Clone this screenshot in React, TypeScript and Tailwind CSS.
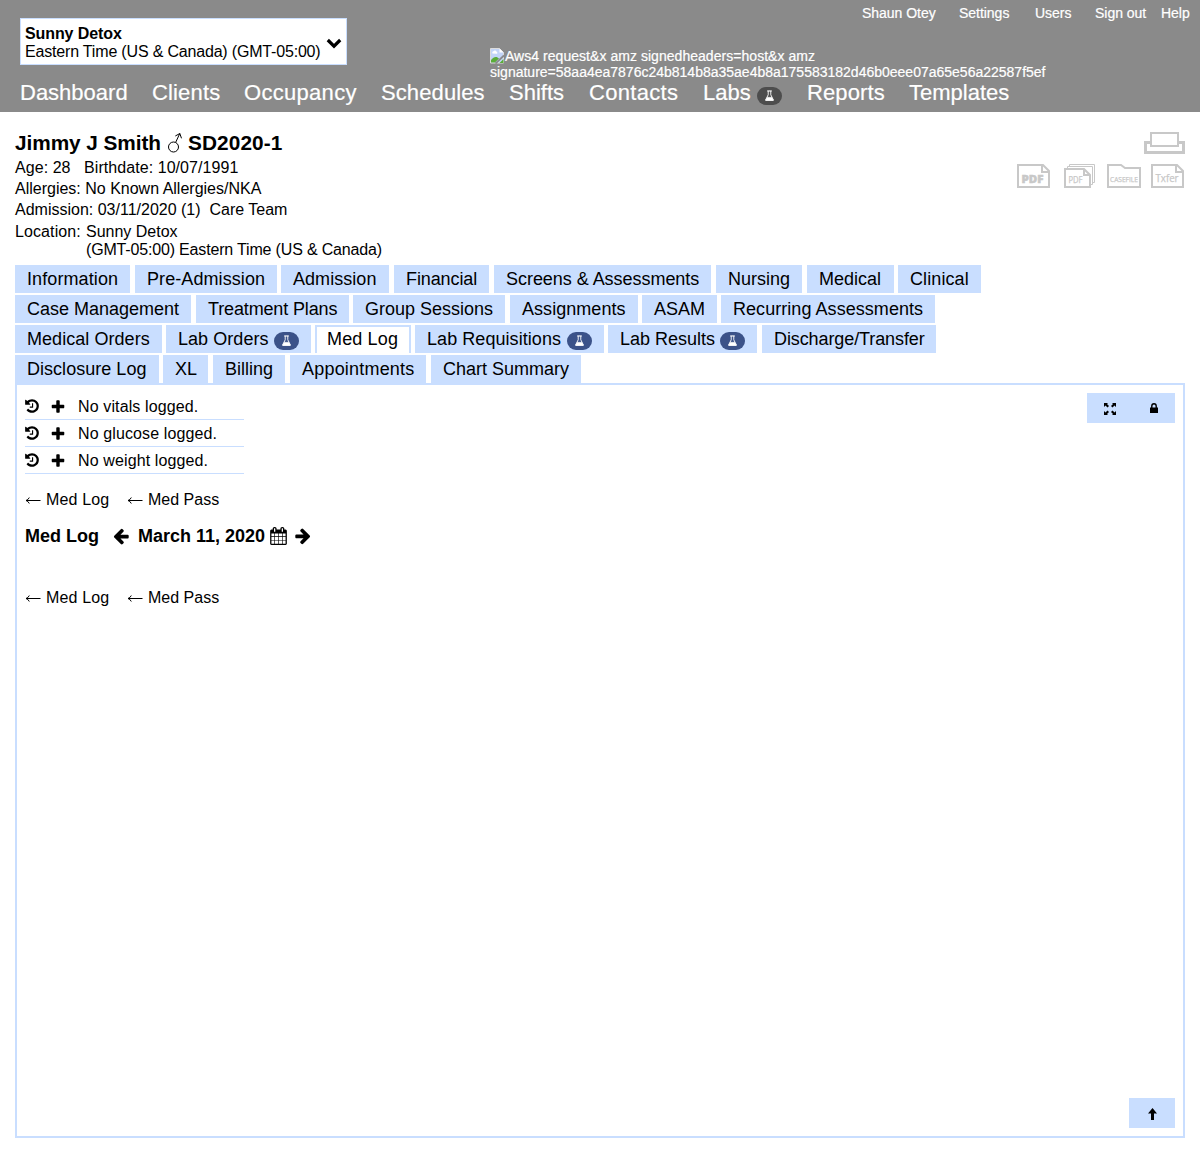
import React from "react";

type IconProps = { className?: string };

const Flask = ({ className = "" }: IconProps) => (
  <svg viewBox="0 0 12 13" className={className} fill="none" stroke="white">
    <path d="M3.5 1h5" strokeWidth="1.2" />
    <path d="M4.6 1v4.2L1.8 10.8h8.4L7.4 5.2V1" strokeWidth="1" />
    <path d="M3.6 8h4.8l1.8 3.4H1.8z" fill="white" strokeWidth="0.8" />
  </svg>
);

const History = () => (
  <svg viewBox="0 0 1536 1792" className="h-4 w-[14px] shrink-0">
    <path d="M1536 896q0 156-61 298t-164 245-245 164-298 61q-172 0-327-72.5t-264-204.5q-7-10-6.5-22.5t8.5-20.5l137-138q10-9 25-9 16 2 23 12 73 95 179 147t225 52q104 0 198.5-40.5t163.5-109.5 109.5-163.5 40.5-198.5-40.5-198.5-109.5-163.5-163.5-109.5-198.5-40.5q-98 0-188 35.5t-160 101.5l137 138q31 30 14 69-17 40-59 40h-448q-26 0-45-19t-19-45v-448q0-42 40-59 39-17 69 14l130 129q107-101 244.5-156.5t284.5-55.5q156 0 298 61t245 164 164 245 61 298zm-640-288v448q0 14-9 23t-23 9h-320q-14 0-23-9t-9-23v-64q0-14 9-23t23-9h224v-352q0-14 9-23t23-9h64q14 0 23 9t9 23z" />
  </svg>
);

const Plus = () => (
  <svg viewBox="0 0 1792 1792" className="mt-px ml-[11px] size-4 shrink-0">
    <path d="M1600 736v192q0 40-28 68t-68 28h-416v416q0 40-28 68t-68 28h-192q-40 0-68-28t-28-68v-416h-416q-40 0-68-28t-28-68v-192q0-40 28-68t68-28h416v-416q0-40 28-68t68-28h192q40 0 68 28t28 68v416h416q40 0 68 28t28 68z" />
  </svg>
);

const BoldArrow = ({ className = "" }: IconProps) => (
  <svg viewBox="0 0 1792 1792" className={className}>
    <path d="M1664 896v128q0 53-32.5 90.5t-84.5 37.5h-704l293 294q38 36 38 90t-38 90l-75 76q-37 37-90 37-52 0-91-37l-651-652q-37-37-37-90 0-52 37-91l651-650q38-38 91-38 52 0 90 38l75 74q38 38 38 91t-38 91l-293 293h704q52 0 84.5 37.5t32.5 90.5z" />
  </svg>
);

const Calendar = () => (
  <svg viewBox="64 0 1664 1792" className="ml-[5px] h-[18px] w-[17px]">
    <path d="M192 1664h288v-288h-288v288zm352 0h320v-288h-320v288zm-352-352h288v-320h-288v320zm352 0h320v-320h-320v320zm-352-384h288v-288h-288v288zm736 736h320v-288h-320v288zm-384-736h320v-288h-320v288zm768 736h288v-288h-288v288zm-384-352h320v-320h-320v320zm-352-864v-288q0-13-9.5-22.5t-22.5-9.5h-64q-13 0-22.5 9.5t-9.5 22.5v288q0 13 9.5 22.5t22.5 9.5h64q13 0 22.5-9.5t9.5-22.5zm736 864h288v-320h-288v320zm-384-384h320v-288h-320v288zm384 0h288v-288h-288v288zm32-480v-288q0-13-9.5-22.5t-22.5-9.5h-64q-13 0-22.5 9.5t-9.5 22.5v288q0 13 9.5 22.5t22.5 9.5h64q13 0 22.5-9.5t9.5-22.5zm384-64v1280q0 52-38 90t-90 38h-1408q-52 0-90-38t-38-90v-1280q0-52 38-90t90-38h128v-96q0-66 47-113t113-47h64q66 0 113 47t47 113v96h384v-96q0-66 47-113t113-47h64q66 0 113 47t47 113v96h128q52 0 90 38t38 90z" />
  </svg>
);

const BrokenImage = () => (
  <svg viewBox="0 0 14 16" className="h-4 w-[14px] shrink-0">
    <path d="M0.5 0.5h9l4 4v10.5h-13z" fill="#c3d5f8" stroke="#dcdcdc" />
    <path d="M9.5 0.5v4h4z" fill="#fff" />
    <path d="M2.5 5.5a1.5 1.5 0 0 1 1-2.3 1.8 1.8 0 0 1 3.2.7 1 1 0 0 1 .3 1.8z" fill="#fff" />
    <path d="M1 14.5v-2.500c3-4 6-3.500 8-1.500l-4 4z" fill="#5aac38" />
    <path d="M14 7.500L5.500 15.500" stroke="#8a8a8a" strokeWidth="1.800" />
    <path d="M13.500 11l-4 4h4z" fill="#5aac38" />
  </svg>
);

const ThinArrow = () => (
  <svg viewBox="0 0 16 10" className="mr-[5px] h-[10px] w-4" fill="none" stroke="black">
    <path d="M1 5.500h14.500" strokeWidth="1" />
    <path d="M4.300 2.500Q3.200 4.900 1 5.500Q3.200 6.100 4.300 8.500" strokeWidth="1" />
  </svg>
);

const nav: [string, string][] = [
  ["Dashboard", "w-[132px]"],
  ["Clients", "w-[92px] tracking-[0.15px]"],
  ["Occupancy", "w-[137px] tracking-[0.3px]"],
  ["Schedules", "w-[128px] tracking-[0.1px]"],
  ["Shifts", "w-[80px]"],
  ["Contacts", "w-[114px] tracking-[0.3px]"],
  ["Labs", "w-[104px]"],
  ["Reports", "w-[102px] tracking-[0.1px]"],
  ["Templates", "w-[110px]"],
];

const rows: [string, string][][] = [
  [
    ["Information", "w-[115px] mr-[5px] tracking-[0.1px]"],
    ["Pre-Admission", "w-[142px] mr-[4px] tracking-[0.08px]"],
    ["Admission", "w-[108px] mr-[5px] tracking-[0.05px]"],
    ["Financial", "w-[95px] mr-[5px] tracking-[-0.1px]"],
    ["Screens & Assessments", "w-[217px] mr-[5px] tracking-[-0.04px]"],
    ["Nursing", "w-[86px] mr-[5px]"],
    ["Medical", "w-[87px] mr-[4px]"],
    ["Clinical", "w-[83px] tracking-[0.1px]"],
  ],
  [
    ["Case Management", "w-[176px] mr-[5px]"],
    ["Treatment Plans", "w-[153px] mr-[4px] tracking-[-0.14px]"],
    ["Group Sessions", "w-[152px] mr-[5px]"],
    ["Assignments", "w-[128px] mr-[4px] tracking-[0.05px]"],
    ["ASAM", "w-[75px] mr-[4px]"],
    ["Recurring Assessments", "w-[214px] tracking-[0.05px]"],
  ],
  [
    ["Medical Orders", "w-[147px] mr-[4px] tracking-[0.05px]"],
    ["Lab Orders", "w-[145px] mr-[4px] tracking-[0.05px]"],
    ["Med Log", "w-[96px] mr-[4px] tracking-[0.15px]"],
    ["Lab Requisitions", "w-[189px] mr-[4px] tracking-[0.06px]"],
    ["Lab Results", "w-[149px] mr-[5px]"],
    ["Discharge/Transfer", "w-[174px] tracking-[-0.1px]"],
  ],
  [
    ["Disclosure Log", "w-[144px] mr-[4px] tracking-[0.03px]"],
    ["XL", "w-[45px] mr-[5px]"],
    ["Billing", "w-[72px] mr-[5px]"],
    ["Appointments", "w-[136px] mr-[5px] tracking-[0.2px]"],
    ["Chart Summary", "w-[150px]"],
  ],
];

const withFlask = ["Lab Orders", "Lab Requisitions", "Lab Results"];

function Tab({ label, size }: { label: string; size: string }) {
  const active = label === "Med Log";
  return (
    <div
      className={`flex h-7 items-center whitespace-nowrap text-[18px] leading-[28px] ${size} ${
        active ? "border-x-2 border-t-2 border-[#c9deff] bg-white pb-[2px] pl-[10px]" : "bg-[#c9deff] pl-3"
      }`}
    >
      {label}
      {withFlask.includes(label) && (
        <span className="mt-1 ml-auto mr-3 flex h-[18px] w-[25px] items-center justify-center rounded-full bg-[#3b5289]">
          <Flask className="h-[12px] w-[11px]" />
        </span>
      )}
    </div>
  );
}

function BackLinks() {
  return (
    <div className="flex h-5 items-center text-[16px] leading-5">
      <span className="flex w-[102px] items-center tracking-[0.15px]"><ThinArrow />Med Log</span>
      <span className="flex items-center"><ThinArrow />Med Pass</span>
    </div>
  );
}

export default function App() {
  return (
    <div className="h-[1175px] w-[1200px] overflow-hidden bg-white font-['Liberation_Sans',Arial,sans-serif] text-[16px] text-black">
      <header className="relative h-28 bg-[#8a8a8a] text-white">
        <div className="flex justify-between">
          <div className="mt-[18px] ml-5 flex h-[47px] w-[327px] items-center border border-[#c9deff] bg-white pl-1 leading-[18px] whitespace-nowrap text-black">
            <div className="pt-[2px]">
              <div className="font-bold tracking-[-0.1px]">Sunny Detox</div>
              <div className="tracking-[-0.18px]">Eastern Time (US &amp; Canada) (GMT-05:00)</div>
            </div>
            <svg viewBox="0 0 16 12" className="mt-1 ml-auto mr-1 h-3 w-4 shrink-0" fill="none" stroke="black" strokeWidth="3.200">
              <path d="M1.800 2L8 8.200L14.200 2" />
            </svg>
          </div>
          <div className="flex pt-[5px] pr-[10px] text-[14px] leading-4 tracking-[-0.03px] whitespace-nowrap [-webkit-text-stroke:0.200px_white]">
            <span className="w-[97px]">Shaun Otey</span>
            <span className="w-[76px]">Settings</span>
            <span className="w-[60px]">Users</span>
            <span className="w-[66px]">Sign out</span>
            <span className="w-[29px]">Help</span>
          </div>
        </div>
        <div className="absolute top-12 left-[490px] text-[14px] leading-4 whitespace-nowrap [-webkit-text-stroke:0.200px_white]">
          <div className="flex"><BrokenImage /><span className="ml-px tracking-[0.04px]">Aws4 request&amp;x amz signedheaders=host&amp;x amz</span></div>
          <div>signature=58aa4ea7876c24b814b8a35ae4b8a175583182d46b0eee07a65e56a22587f5ef</div>
        </div>
        <nav className="mt-[15px] ml-5 flex text-[22px] leading-[26px] [-webkit-text-stroke:0.200px_white]">
          {nav.map(([label, size]) => (
            <span key={label} className={`flex items-center ${size}`}>
              {label}
              {label === "Labs" && (
                <span className="mt-[6px] ml-[6px] flex h-[18px] w-[25px] items-center justify-center rounded-full bg-[#4d4d4d]">
                  <Flask className="h-[12px] w-[11px]" />
                </span>
              )}
            </span>
          ))}
        </nav>
      </header>

      <main className="px-[15px] pt-[17px]">
        <section className="flex h-[136px] justify-between">
          <div>
            <h1 className="flex h-[28px] items-start text-[20.800px] leading-[27px] font-bold whitespace-nowrap">
              <span className="w-[146px] tracking-[-0.07px]">Jimmy J Smith</span>
              <svg viewBox="0 0 16 22" className="mt-[3px] ml-[6px] mr-[5px] h-[22px] w-4" fill="none" stroke="black" strokeWidth="1">
                <circle cx="6.500" cy="15" r="5" />
                <path d="M8.600 10.500L12.800 1.500M8.300 4L12.800 1.500L14.500 6.300" />
              </svg>
              <span className="tracking-[0.1px]">SD2020-1</span>
            </h1>
            <div className="h-[21px] leading-[21px] tracking-[0.06px] whitespace-pre">Age: 28   Birthdate: 10/07/1991</div>
            <div className="h-[21px] leading-[21px]">Allergies: No Known Allergies/NKA</div>
            <div className="h-[22px] leading-[21px] whitespace-pre">Admission: 03/11/2020 (1)  Care Team</div>
            <div className="flex pt-[2px] leading-[18px]">
              <span className="w-[71px] tracking-[0.1px]">Location:</span>
              <div><div>Sunny Detox</div><div className="tracking-[-0.17px]">(GMT-05:00) Eastern Time (US &amp; Canada)</div></div>
            </div>
          </div>
          <div className="flex flex-col items-end pt-[3px]">
            <svg viewBox="0 0 41 22" className="h-[22px] w-[41px]" fill="none" stroke="#c8c8c8">
              <path d="M6.500 10.500H1.500V20.500H39.500V10.500H34.500" strokeWidth="3" />
              <path d="M7 1h27v13H7z" strokeWidth="2" />
            </svg>
            <svg viewBox="0 0 168 24" className="mt-[10px] h-6 w-[168px]" fill="none" stroke="#c8c8c8" strokeWidth="2">
              <path d="M1 1h25l6 6v16H1zM25 1v7h7" />
              <path d="M48 5h19l6 6v12H48zM67 5v6h6" />
              <path d="M50.500 4V2.500h25V20.500h-1.500M52.500 2V.5h25V18.500h-1.500" strokeWidth="1" />
              <path d="M91 1h13l4 3h15v19H91z" />
              <path d="M135 1h25l6 6v16h-31zM159 1v7h7" />
              <g fill="#c8c8c8" stroke="#c8c8c8" strokeWidth="0.250" textAnchor="middle" fontFamily="Open Sans, Noto Sans, sans-serif">
                <text x="15.500" y="19" fontSize="11" fontWeight="800" textLength="22" lengthAdjust="spacingAndGlyphs" strokeWidth="0.500">PDF</text>
                <text x="58.500" y="19" fontSize="8.500" textLength="14" lengthAdjust="spacingAndGlyphs">PDF</text>
                <text x="107" y="18" fontSize="7" textLength="28" lengthAdjust="spacingAndGlyphs">CASEFILE</text>
                <text x="150" y="18" fontSize="10" textLength="23" lengthAdjust="spacingAndGlyphs">Txfer</text>
              </g>
            </svg>
          </div>
        </section>

        <div className="flex flex-col gap-[2px]">
          {rows.map((row, i) => (
            <div key={i} className="flex">
              {row.map(([label, size]) => <Tab key={label} label={label} size={size} />)}
            </div>
          ))}
        </div>

        <section className="flex h-[755px] flex-col justify-between border-2 border-[#c9deff] p-2">
          <div className="flex justify-between">
            <div>
              {["vitals", "glucose", "weight"].map((name) => (
                <div key={name} className="flex h-[27px] w-[219px] items-center border-b border-[#c9deff] leading-[24px] tracking-[0.12px]">
                  <History /><Plus />
                  <span className="ml-3 pt-[2px]">No {name} logged.</span>
                </div>
              ))}
              <div className="mt-4"><BackLinks /></div>
              <div className="mt-[15px] flex h-[22px] items-center text-[18px] leading-[22px] font-bold whitespace-nowrap">
                <span className="w-[87px]">Med Log</span>
                <BoldArrow className="size-[18px]" />
                <span className="ml-2">March 11, 2020</span>
                <Calendar />
                <BoldArrow className="mt-[2px] ml-[7px] size-[18px] rotate-180" />
              </div>
              <div className="mt-[41px]"><BackLinks /></div>
            </div>
            <div className="flex h-[30px] w-[88px] bg-[#c9deff]">
              <div className="flex w-[46px] items-center justify-center">
                <svg viewBox="0 0 12 12" className="mt-[2px] size-3">
                  <path d="M0 0h4L3 1l2 2-1.500 1.500-2-2L0 4zM12 0v4l-1.500-1.500-2 2L7 3l2-2-1-1zM0 12V8l1.500 1.500 2-2L5 9l-2 2 1 1zM12 12H8l1-1-2-2 1.500-1.500 2 2L12 8z" />
                </svg>
              </div>
              <div className="flex w-[42px] items-center justify-center">
                <svg viewBox="0 0 8 10" className="h-[10px] w-2">
                  <path d="M0 4.500h8V10H0z" />
                  <path d="M1.800 5V3a2.200 2.200 0 0 1 4.400 0v2" fill="none" stroke="black" strokeWidth="1.400" />
                </svg>
              </div>
            </div>
          </div>
          <div className="flex h-[30px] w-[46px] items-center justify-center self-end bg-[#c9deff]">
            <svg viewBox="0 0 9 12" className="mt-[2px] h-3 w-[9px]"><path d="M4.500 0L9 5.500H6V12H3V5.500H0z" /></svg>
          </div>
        </section>
      </main>
    </div>
  );
}
